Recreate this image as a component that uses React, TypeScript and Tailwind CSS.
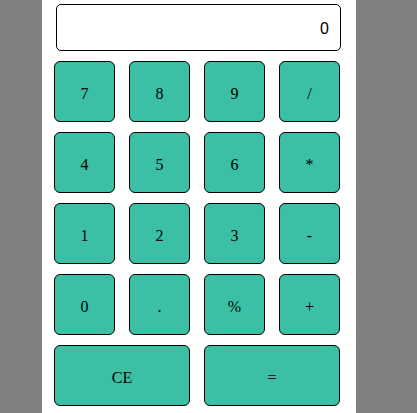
import React from 'react'

const keys = ['7', '8', '9', '/', '4', '5', '6', '*', '1', '2', '3', '-', '0', '.', '%', '+']

function Key({ label, wide }: { label: string; wide?: boolean }) {
  return (
    <button
      className={`h-[61px] ${wide ? 'col-span-2' : ''} pt-[5px] rounded-[6px] border border-black bg-[#3bc0a5] text-[16px] text-black font-['Liberation_Serif',serif]`}
    >
      {label}
    </button>
  )
}

export default function App() {
  return (
    <div className="min-h-[413px] bg-[#808080] flex">
      <div className="ml-[42px] w-[314px] bg-white pl-[12px] pt-[4px] pb-[8px]">
        <div className="ml-[2px] w-[285px] h-[47px] pt-[3px] rounded-[5px] border border-black flex items-center justify-end pr-[11px] font-['Liberation_Sans',sans-serif] text-[16px] text-black">
          0
        </div>
        <div className="mt-[10px] grid grid-cols-[repeat(4,61px)] gap-x-[14px] gap-y-[10px]">
          {keys.map(k => (
            <Key key={k} label={k} />
          ))}
          <Key label="CE" wide />
          <Key label="=" wide />
        </div>
      </div>
    </div>
  )
}
